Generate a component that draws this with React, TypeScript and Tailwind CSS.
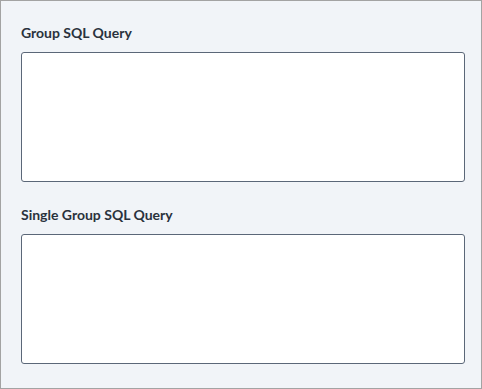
export default function App() {
  return (
    <div className="w-[482px] h-[389px] border border-[#a3a3a3] bg-[#f1f4f8] px-5 pt-[23px] flex flex-col gap-6 font-['Lato','Noto_Sans',sans-serif]">
      <div className="flex flex-col">
        <label className="text-[14px] leading-[18px] font-bold text-[#2a323d] mb-[10px]">Group SQL Query</label>
        <textarea className="w-[444px] h-[130px] rounded-[3px] border border-[#5b6778] bg-white resize-none outline-none" />
      </div>
      <div className="flex flex-col">
        <label className="text-[14px] leading-[18px] font-bold text-[#2a323d] mb-[10px]">Single Group SQL Query</label>
        <textarea className="w-[444px] h-[130px] rounded-[3px] border border-[#5b6778] bg-white resize-none outline-none" />
      </div>
    </div>
  );
}
